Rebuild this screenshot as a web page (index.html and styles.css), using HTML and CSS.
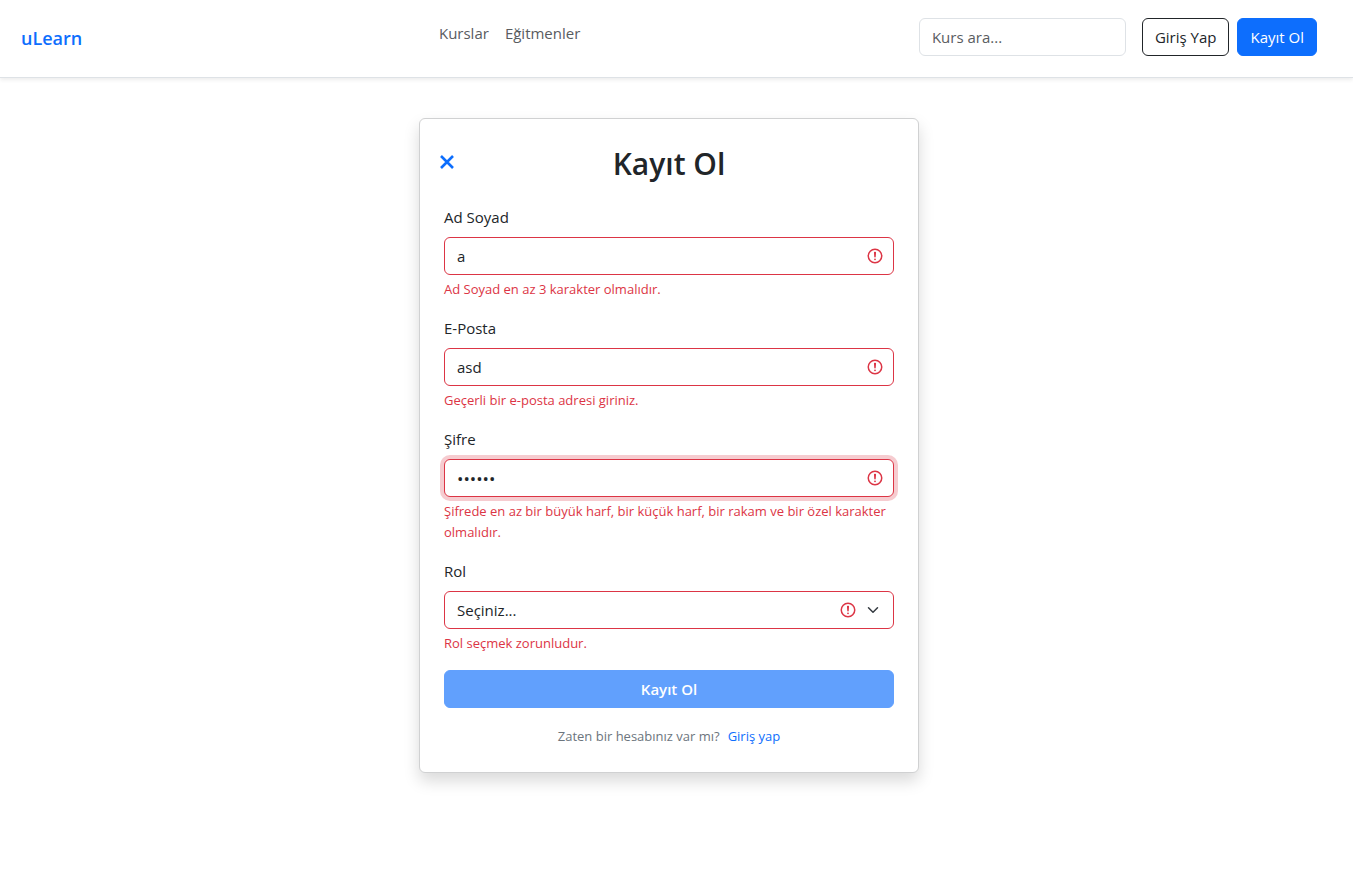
FILE: index.html
```html
<!DOCTYPE html>
<html lang="tr">
<head>
<meta charset="utf-8">
<meta name="viewport" content="width=device-width, initial-scale=1">
<title>uLearn - Kayıt Ol</title>
<link rel="stylesheet" href="styles.css">
</head>
<body>
<svg class="sprite" aria-hidden="true">
  <symbol id="icon-invalid" viewBox="0 0 12 12">
    <circle cx="6" cy="6" r="4.5" fill="none" stroke="currentColor"/>
    <path d="M5.8 3.6h.4L6 6.5z" fill="none" stroke="currentColor" stroke-linejoin="round"/>
    <circle cx="6" cy="8.2" r=".6" fill="currentColor"/>
  </symbol>
</svg>

<header class="navbar">
  <a class="brand" href="#">uLearn</a>
  <nav class="nav-links">
    <a href="#">Kurslar</a>
    <a href="#">Eğitmenler</a>
  </nav>
  <div class="nav-actions">
    <input class="control search" type="search" placeholder="Kurs ara..." aria-label="Kurs ara">
    <button class="btn btn-outline" type="button">Giriş Yap</button>
    <button class="btn btn-primary" type="button">Kayıt Ol</button>
  </div>
</header>

<main class="page">
  <section class="card">
    <button class="close" type="button" aria-label="Kapat">
      <svg viewBox="0 0 16 16"><path d="M2 2 14 14M14 2 2 14" fill="none" stroke="currentColor" stroke-width="2.6"/></svg>
    </button>
    <h1 class="title">Kayıt Ol</h1>
    <form novalidate>
      <div class="field">
        <label for="name">Ad Soyad</label>
        <div class="control-wrap">
          <input class="control invalid" id="name" type="text" value="a" aria-describedby="name-error">
          <svg class="invalid-icon"><use href="#icon-invalid"/></svg>
        </div>
        <p class="feedback" id="name-error">Ad Soyad en az 3 karakter olmalıdır.</p>
      </div>
      <div class="field">
        <label for="email">E-Posta</label>
        <div class="control-wrap">
          <input class="control invalid" id="email" type="email" value="asd" aria-describedby="email-error">
          <svg class="invalid-icon"><use href="#icon-invalid"/></svg>
        </div>
        <p class="feedback" id="email-error">Geçerli bir e-posta adresi giriniz.</p>
      </div>
      <div class="field">
        <label for="password">Şifre</label>
        <div class="control-wrap">
          <input class="control invalid active" id="password" type="password" value="Sifre1" aria-describedby="password-error">
          <svg class="invalid-icon"><use href="#icon-invalid"/></svg>
        </div>
        <p class="feedback" id="password-error">Şifrede en az bir büyük harf, bir küçük harf, bir rakam ve bir özel karakter olmalıdır.</p>
      </div>
      <div class="field">
        <label for="role">Rol</label>
        <div class="control-wrap">
          <select class="control invalid" id="role" aria-describedby="role-error">
            <option>Seçiniz...</option>
          </select>
          <svg class="invalid-icon beside-arrow"><use href="#icon-invalid"/></svg>
          <svg class="arrow" viewBox="0 0 16 16"><path d="m2 5 6 6 6-6" fill="none" stroke="currentColor" stroke-width="2" stroke-linecap="round" stroke-linejoin="round"/></svg>
        </div>
        <p class="feedback" id="role-error">Rol seçmek zorunludur.</p>
      </div>
      <button class="btn btn-primary submit" type="submit" disabled>Kayıt Ol</button>
    </form>
    <p class="login-hint"><span>Zaten bir hesabınız var mı?</span><a href="#">Giriş yap</a></p>
  </section>
</main>
</body>
</html>
```
FILE: styles.css
```css
* {
  box-sizing: border-box;
}

body {
  margin: 0;
  background: #fff;
  color: #212529;
  font: 400 15px/24px "Segoe UI", "Open Sans", "Noto Sans", sans-serif;
}

a {
  color: #0d6efd;
  text-decoration: none;
}

.sprite {
  display: none;
}

.navbar {
  display: grid;
  grid-template-columns: 418fr 480fr auto;
  padding: 18px 36px 19px 21px;
  border-bottom: 1px solid #dee2e6;
  box-shadow: 0 2px 4px rgba(0, 0, 0, 0.075);
}

.brand {
  justify-self: start;
  font-size: 18px;
  font-weight: 600;
  line-height: 40px;
}

.nav-links {
  display: flex;
  gap: 16px;
  padding-top: 3px;
}

.nav-links a {
  color: #595c5f;
}

.nav-actions {
  display: flex;
  align-items: flex-start;
  gap: 8px;
}

.control {
  display: block;
  width: 100%;
  height: 38px;
  padding: 6px 12px;
  border: 1px solid #dee2e6;
  border-radius: 6px;
  background: #fff;
  color: #212529;
  font: inherit;
  appearance: none;
  outline: 0;
}

.control::placeholder {
  color: #595c5f;
  opacity: 1;
}

.search {
  width: 207px;
  margin-right: 8px;
}

.btn {
  height: 38px;
  padding: 6px 12px;
  border: 1px solid transparent;
  border-radius: 6px;
  font: inherit;
  white-space: nowrap;
}

.btn-outline {
  border-color: #212529;
  background: #fff;
  color: #212529;
}

.btn-primary {
  border-color: #0d6efd;
  background: #0d6efd;
  color: #fff;
}

.page {
  padding: 40px 31px 40px 16px;
}

.card {
  position: relative;
  max-width: 500px;
  margin: 0 auto;
  padding: 24px;
  border: 1px solid #d0d1d2;
  border-radius: 6px;
  background: #fff;
  box-shadow: 0 8px 16px rgba(0, 0, 0, 0.15);
}

.close {
  position: absolute;
  top: 35px;
  left: 19px;
  padding: 0;
  border: 0;
  background: none;
  color: #0d6efd;
}

.close svg {
  display: block;
  width: 16px;
  height: 16px;
}

.title {
  margin: 0 0 20px;
  font-size: 30px;
  font-weight: 600;
  line-height: 42px;
  text-align: center;
}

.field {
  margin-bottom: 16px;
}

.field label {
  display: block;
  margin-bottom: 8px;
}

.control-wrap {
  position: relative;
}

.invalid {
  padding-right: 36px;
  border-color: #dc3545;
}

.active {
  box-shadow: 0 0 0 4px rgba(220, 53, 69, 0.25);
}

.control[type="password"] {
  font-size: 17px;
}

.invalid-icon {
  position: absolute;
  top: 10px;
  right: 10px;
  width: 18px;
  height: 18px;
  color: #dc3545;
  pointer-events: none;
}

.beside-arrow {
  right: 37px;
}

.arrow {
  position: absolute;
  top: 13px;
  right: 15px;
  width: 12px;
  height: 12px;
  color: #343a40;
  pointer-events: none;
}

.feedback {
  margin: 4px 0 0;
  color: #dc3545;
  font-size: 13px;
  line-height: 21px;
}

.submit {
  display: block;
  width: 100%;
  font-weight: 600;
}

.submit:disabled {
  opacity: 0.65;
}

.login-hint {
  display: flex;
  justify-content: center;
  gap: 8px;
  margin: 16px 0 0;
  color: #6c757d;
  font-size: 13px;
}
```
